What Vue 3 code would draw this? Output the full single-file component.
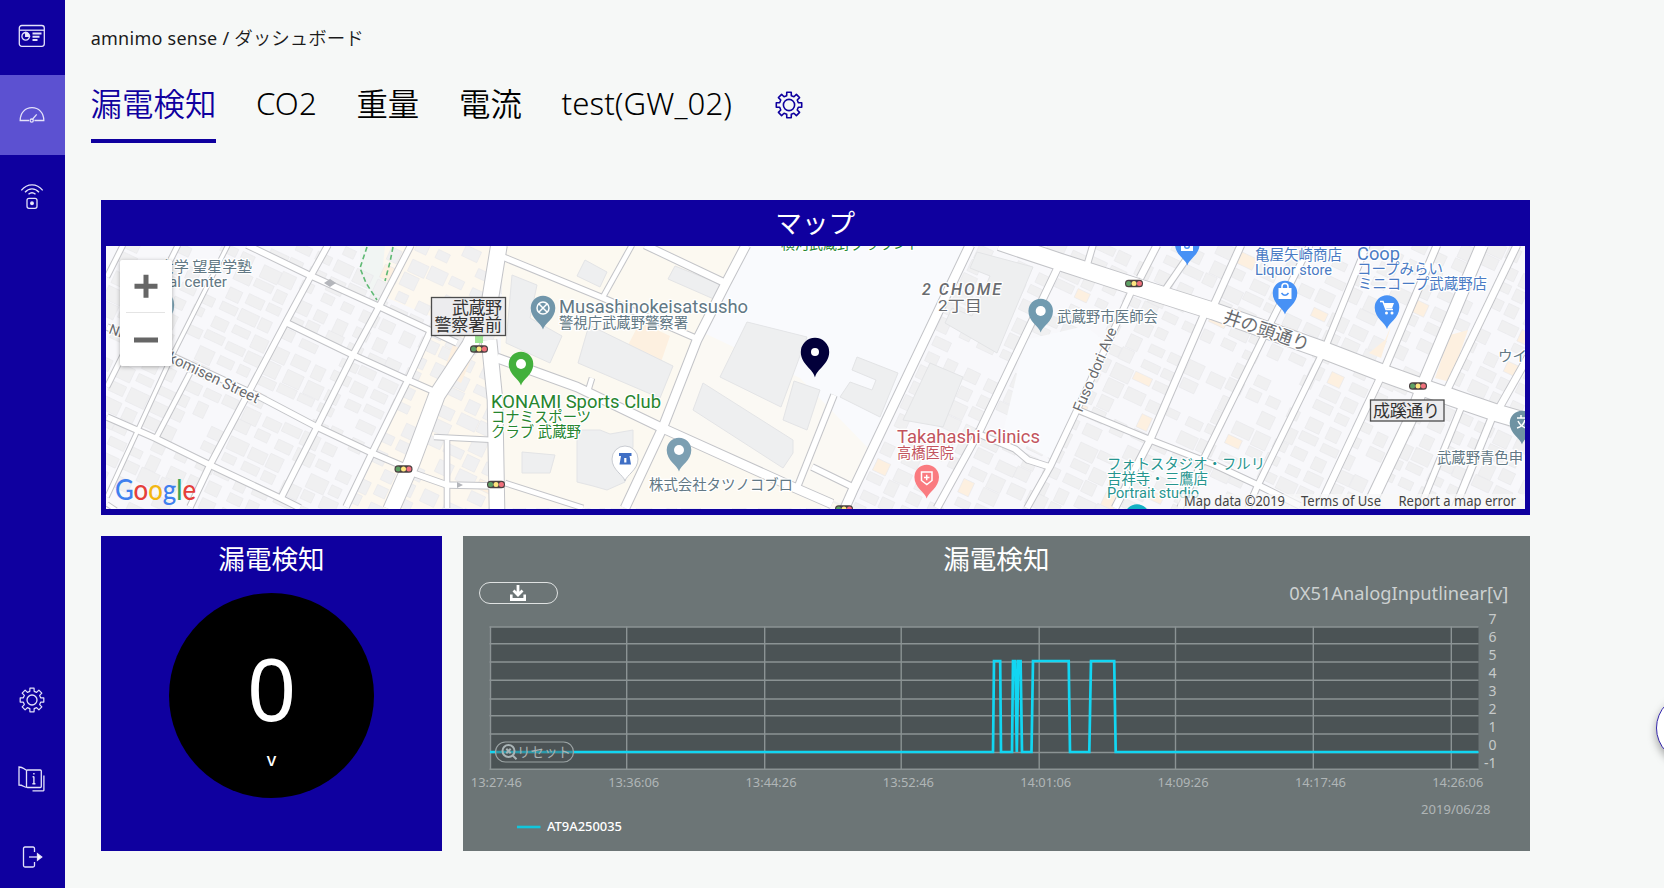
<script setup>
const tabs = [
  { t: '漏電検知', jp: true }, { t: 'CO2' }, { t: '重量', jp: true },
  { t: '電流', jp: true }, { t: 'test(GW_02)' },
]

const gear = (() => {
  const pts = []
  const at = (r, deg) => {
    const a = (deg * Math.PI) / 180
    return `${(r * Math.sin(a)).toFixed(2)} ${(-r * Math.cos(a)).toFixed(2)}`
  }
  for (let i = 0; i < 8; i++) {
    const c = i * 45
    pts.push(at(9.6, c - 14), at(12.9, c - 10), at(12.9, c + 10), at(9.6, c + 14))
  }
  return 'M' + pts.join('L') + 'Z'
})()

// Map roads: [width, points]
const roads = [
  [5, '107,277 123,245'], [5, '107,387 178,245'], [4, '107,497 172,356 228,245'],
  [5, '156,438 190,373'], [6, '190,507 210,465 243,403 287,320 313,272 328,245'],
  [6, '280,500 317,427 353,355 380,305 411,245'], [6, '346,507 372,453 408,380 430,332'],
  [16, '391,510 412,462 437,395 470,345 490,300 499,245'], [15, '489,340 495,400 497,510'],
  [6, '247,245 307,274 380,307 457,343'], [6, '285,322 353,355 408,380 440,394'],
  [6, '107,327 180,360 260,397 317,427 372,453 405,467'],
  [6, '107,417 155,438 210,465 280,498 300,508'], [4, '107,504 116,510'],
  [5, '434,437 495,440'], [5, '447,440 447,508'], [6, '410,472 447,485 497,486'],
  [5, '505,483 583,508'], [6, '503,257 603,298 700,340'], [5, '603,297 632,245'],
  [9, '746,245 725,285 697,340 663,427 625,508'], [7, '645,245 723,282'],
  [9, '497,358 577,387 660,427 793,487 832,504'], [5, '588,391 592,378'],
  [6, '797,488 834,395'], [6, '812,467 855,488'], [9, '970,245 853,490 845,508'],
  [7, '1060,263 980,430 937,508'], [6, '974,432 1015,449 1028,460 1050,467'],
  [6, '1133,288 1077,410 1050,467 1027,508'], [7, '1140,278 1157,245'],
  [6, '1085,272 1093,245'], [6, '1078,410 1153,441 1215,465 1260,486 1300,506'],
  [7, '1207,308 1150,440 1115,508'], [7, '1213,307 1241,245'], [6, '1165,290 1196,245'],
  [6, '1310,245 1267,330 1203,460 1180,508'], [6, '1367,245 1325,348 1257,487 1248,508'],
  [7, '1437,245 1384,370 1325,495 1320,508'], [12, '1482,245 1423,385 1410,420 1368,508'],
  [7, '1517,245 1447,390'], [6, '1463,403 1420,508'], [7, '1528,357 1498,410'],
  [7, '1493,415 1455,508'],
  [17, '1000,242 1060,262 1137,287 1213,311 1323,350 1380,372 1430,390 1497,413 1528,422'],
]

// Small houses laid on a grid that follows the street direction
const houses = (() => {
  let seed = 11
  const rnd = () => (seed = (seed * 16807) % 2147483647) / 2147483647
  const out = []
  for (let u = 0; u < 1500; u += 22) {
    for (let v = -600; v < 330; v += 17) {
      const w = 11 + rnd() * 9
      const h = 8 + rnd() * 7
      const o = rnd() * 4
      const warm = rnd()
      const skip = rnd()
      const x = 100 + u * 0.905 - v * 0.425
      const y = 246 + u * 0.425 + v * 0.905
      if (x < 95 || x > 1530 || y < 235 || y > 515 || skip < 0.16) continue
      out.push({ x: u + o, y: v + o, w, h, warm: x > 380 && warm > 0.965 })
    }
  }
  return out
})()

const blocks = [
  '512,275 537,285 530,318 562,336 550,363 506,343', '589,325 673,366 660,398 578,363',
  '747,322 807,337 781,407 720,377', '703,383 793,440 793,453 783,468 693,410',
  '794,381 820,390 807,430 783,420',
  '577,430 600,430 610,434 633,430 633,447 622,470 625,482 607,490 593,486 577,482',
  '977,252 1033,267 997,353 945,323 952,308 972,316 990,276 970,268', '930,363 963,377 943,427 903,420',
  '857,357 898,373 880,417 840,397 850,382 872,390 876,380 852,370', '585,260 607,272 600,287 577,276',
  '675,266 722,285 716,300 668,279', '522,452 555,455 550,473 522,473',
]

const labels = [
  { t: '大学 望星学塾', x: 159, y: 272, s: 15, w: 93, c: 'slate' },
  { t: 'Cultural center', x: 129, y: 286.5, s: 14.5, w: 98, c: 'slate' },
  { t: 'Musashinokeisatsusho', x: 559, y: 313, s: 18, w: 189, c: 'slate' },
  { t: '警視庁武蔵野警察署', x: 559, y: 328, s: 14.5, w: 129, c: 'slate' },
  { t: 'KONAMI Sports Club', x: 491, y: 407.5, s: 18, w: 170, c: 'green' },
  { t: 'コナミスポーツ', x: 491, y: 422, s: 14.5, w: 100, c: 'green' },
  { t: 'クラブ 武蔵野', x: 491, y: 437, s: 14.5, w: 90, c: 'green' },
  { t: '株式会社タツノコブロ', x: 649, y: 490, s: 14.5, w: 144, c: 'slate' },
  { t: '武蔵野市医師会', x: 1057, y: 322, s: 14.5, w: 101, c: 'slate' },
  { t: 'Takahashi Clinics', x: 897, y: 443, s: 18, w: 143, c: 'red' },
  { t: '高橋医院', x: 897, y: 458, s: 14.5, w: 57, c: 'red' },
  { t: 'フォトスタジオ・フルリ', x: 1107, y: 469, s: 14.5, w: 158, c: 'teal' },
  { t: '吉祥寺・三鷹店', x: 1107, y: 484, s: 14.5, w: 101, c: 'teal' },
  { t: 'Portrait studio', x: 1107, y: 498, s: 14, w: 92, c: 'teal' },
  { t: '亀屋矢崎商店', x: 1255, y: 260, s: 14.5, w: 87, c: 'blue' },
  { t: 'Liquor store', x: 1255, y: 274.5, s: 14, w: 77, c: 'blue' },
  { t: 'Coop', x: 1357, y: 259.5, s: 18, w: 43, c: 'blue' },
  { t: 'コープみらい', x: 1357, y: 274, s: 14.5, w: 86, c: 'blue' },
  { t: 'ミニコープ武蔵野店', x: 1358, y: 289, s: 14.5, w: 129, c: 'blue' },
  { t: '武蔵野青色申', x: 1437, y: 463, s: 14.5, w: 86, c: 'slate' },
  { t: 'ウイ', x: 1498, y: 361, s: 14.5, w: 29, c: 'slate' },
  { t: '横河武蔵野グラウンド', x: 781, y: 248.5, s: 14.5, w: 140, c: 'green' },
  { t: '2丁目', x: 938, y: 311, s: 15, w: 44, c: 'gray' },
]

const pins = [
  { x: 543, y: 308, f: '#7196aa' }, { x: 521, y: 364, f: '#43b03c', dot: 1 },
  { x: 679, y: 450, f: '#7c9fb2', dot: 1 }, { x: 1040.7, y: 311, f: '#719bb0', dot: 1 },
  { x: 926.7, y: 477, f: '#fa7b80' }, { x: 1285, y: 293, f: '#4791f5' },
  { x: 1387, y: 307.5, f: '#4791f5' }, { x: 1187.3, y: 244, f: '#4791f5' },
  { x: 1522, y: 423, f: '#6f93a3' }, { x: 1137, y: 516.5, f: '#12b0c4' },
]

const lights = [[403.5, 469], [479, 349], [496, 484.5], [1134, 283.5], [1418, 386], [844, 509]]

const gridY = [627, 643.7, 662, 680.3, 699, 715.7, 734, 752.5, 769.3]
const gridX = [490.5, 626.7, 764.7, 901.2, 1039.2, 1175.5, 1313.3, 1451.3]
const yLabels = [7, 6, 5, 4, 3, 2, 1, 0, -1].map((v, i) => ({ v, y: 624 + i * 18 }))
const xLabels = ['13:27:46', '13:36:06', '13:44:26', '13:52:46', '14:01:06', '14:09:26', '14:17:46', '14:26:06']
  .map((t, i) => ({ t, x: 470.8 + i * 137.35 }))
const series =
  '490,752 993,752 994,661 1000.2,661 1001,752 1012,752 1013,661 1015.3,661 1016.8,752 1018.3,661 1020.6,661 1022,752 1031.5,752 1033,661 1068.7,661 1070,752 1089.3,752 1091,661 1114.2,661 1115.7,752 1478.5,752'
</script>

<template>
  <div class="app">
    <nav class="sidebar">
      <a class="item first">
        <svg width="28" height="24" viewBox="0 0 28 24" class="line">
          <rect x="1.3" y="1.5" width="25" height="20.8" rx="2.5" /><path d="M1.5 6.2h24.7" />
          <path d="M11.5 12.3a3.8 3.8 0 1 1-3.7-3.8v3.8z" /><path d="M7.8 8.5a3.8 3.8 0 0 1 3.8 3.8l-3.8 0z" fill="#eceaff" />
          <path d="M14.5 9.5h9M14.5 12.8h7M14.5 16h5" stroke-width="1.9" />
        </svg>
      </a>
      <a class="item active">
        <svg width="28" height="18" viewBox="0 0 28 18" class="line">
          <path d="M11 14.5H2.2c0-8 5.2-12.8 11.8-12.8s11.8 4.8 11.8 12.8H16.4" /><circle cx="13.7" cy="14.6" r="1.6" /><path d="M14.7 13l4-4.6" />
        </svg>
      </a>
      <a class="item sensor">
        <svg width="26" height="28" viewBox="0 0 26 28" class="line">
          <path d="M2.3 8.3c6-7.2 15.4-7.2 21.4 0M6 10.3c4-4.6 10-4.6 14 0M9.5 12.3c2.2-2 4.8-2 7 0" />
          <rect x="8" y="16.3" width="10" height="10" rx="2" /><circle cx="13" cy="21.3" r="1.3" fill="#fff" />
        </svg>
      </a>
      <span class="grow"></span>
      <a class="item">
        <svg width="28" height="28" viewBox="-14 -14 28 28" class="line"><path :d="gear" stroke-linejoin="round" transform="scale(.93)" /><circle r="5" /></svg>
      </a>
      <a class="item">
        <svg width="30" height="28" viewBox="0 0 30 28" class="line">
          <rect x="9.5" y="5" width="14.8" height="17.5" rx="1" /><path d="M9.5 5C7 4.5 6.5 2 2 2v18c4 0 4.5 2 7.5 2.3M26.9 10.5v14.8q0 .5-.5.5H15.5" />
          <path d="M16.9 11.5v7M15.4 18.7h3M15.6 11.7h1.3M16.9 8v1.5" stroke-width="1.4" />
        </svg>
      </a>
      <a class="item last">
        <svg width="24" height="24" viewBox="0 0 24 24" class="line">
          <path d="M14.5 7V3.5q0-1.5-1.5-1.5H5Q3.5 2 3.5 3.5v17Q3.5 22 5 22h8q1.5 0 1.5-1.5V17" /><path d="M9 12h10" /><path d="M17.5 8.8l4.2 3.2-4.2 3.2z" fill="#fff" />
        </svg>
      </a>
    </nav>

    <main class="main">
      <div class="crumbs"><span class="crumb-root">amnimo sense /</span><span>ダッシュボード</span></div>
      <div class="tabs">
        <a v-for="(tab, i) in tabs" :key="tab.t" class="tab" :class="{ on: i === 0, jp: tab.jp }">{{ tab.t }}</a>
        <svg class="tab-gear" width="30" height="30" viewBox="-15 -15 30 30"><path :d="gear" stroke-linejoin="round" /><circle r="5.6" /></svg>
      </div>

      <section class="card map-card">
        <h2>マップ</h2>
        <svg class="map" width="1419" height="263" viewBox="106 246 1419 263">
          <rect x="106" y="246" width="1419" height="263" fill="#f8f8fb" />
          <path d="M360 246h40l-22 58-18-28z" fill="#f1f5f3" />
          <path d="M385 246h115l-10 264H350l50-110 40-80-60-25z" fill="#fdf8ef" />
          <g transform="matrix(.905 .425 -.425 .905 100 246)">
            <rect v-for="(h, i) in houses" :key="i" :x="h.x" :y="h.y" :width="h.w" :height="h.h" :fill="h.warm ? '#fdf0e0' : '#f0f0f1'" stroke="#e9e9eb" stroke-width=".6" />
          </g>
          <path d="M503 246h243L663 427 845 508H497z" fill="#fcf9f1" />
          <path d="M703 330L663 427l185 80 30-60-80-75z" fill="#fbf9f4" />
          <path d="M746 246h222L870 450l-70-72-96-45z" fill="#f9fafd" />
          <path d="M1025 340l60-14 20 15-50 120-52-28z" fill="#f9fafd" />
          <path d="M640 322l30 14-9 26-34-15zM453 345l20 10-12 28-18-10zM1450 335l18-5-18 52-15-4zM1385 340l6-14-10 32-12-5z" fill="#fdf0e0" />
          <polygon v-for="(b, i) in blocks" :key="'b' + i" :points="b" fill="#eeeff0" stroke="#e3e4e6" />
          <polyline v-for="(r, i) in roads" :key="'c' + i" :points="r[1]" fill="none" stroke="#c3c4c8" :stroke-width="r[0] + 1.6" stroke-linejoin="round" />
          <polyline v-for="(r, i) in roads" :key="'r' + i" :points="r[1]" fill="none" stroke="#fff" :stroke-width="r[0] - 0.4" stroke-linejoin="round" />
          <path d="M367 247l-7 21 6 15 11 17M393 247l-3 15-5 19" class="trail" />
          <path d="M324 283l6-4 6 4-6 4zM449 485h8v-3l6 3-6 3v-3" fill="#b4b6bb" />
          <rect x="475" y="335" width="8" height="8" fill="#9fe495" />

          <g v-for="(l, i) in lights" :key="'l' + i" :transform="`translate(${l[0]} ${l[1]})`">
            <rect x="-9" y="-3.8" width="18" height="7.6" rx="3.5" fill="#4a4040" />
            <circle cx="-5.4" r="2.5" fill="#5da064" /><circle r="2.5" fill="#ffe680" /><circle cx="5.4" r="2.5" fill="#f0707c" />
          </g>

          <g v-for="(p, i) in pins" :key="'p' + i" :transform="`translate(${p.x} ${p.y})`">
            <path d="M0 21.5C-1.5 15-12.3 11-12.3 0a12.3 12.3 0 0 1 24.6 0C12.3 11 1.5 15 0 21.5z" :fill="p.f" />
            <circle v-if="p.dot" r="5" fill="#fff" />
          </g>
          <g fill="none" stroke="#fff" stroke-width="1.5">
            <circle cx="543" cy="308" r="6" /><path d="M539 304l8 8M547 304l-8 8" />
            <path d="M921.5 472h10.5v8.5l-5.2 4-5.3-4zM924 477.5h5.5M926.7 474.8v5.5" />
            <path d="M1282 289v-2.5a3 3 0 0 1 6 0v2.5" />
            <path d="M1517 418h9M1521 415v3M1518 421c2 4 4 6 8 7M1525 420c-1 4-4 7-8 8" />
            <path d="M1380 301.5h3l3 8h7" />
          </g>
          <path d="M1278.5 288h13v11h-13zM1384 303h10l-2 5.5h-6.5zM1181 243h12v8h-12z" fill="#fff" />
          <circle cx="1386.5" cy="313" r="1.5" fill="#fff" /><circle cx="1392" cy="313" r="1.5" fill="#fff" />
          <path d="M1281.5 293q3.5 4.5 7 0" fill="none" stroke="#4791f5" stroke-width="1.5" />
          <circle cx="1187" cy="246" r="2.3" fill="none" stroke="#4791f5" stroke-width="1.4" />
          <path d="M625 481c-1.5-6-13-11-13-22a13 13 0 0 1 26 0c0 11-11.5 16-13 22z" fill="#fff" stroke="#c9ccd2" />
          <path d="M619 453h12.500v3h-2l1.500 8.500h-11.500l1.500-8.500h-2z" fill="#3f6fc5" /><path d="M625.3 458v4.500" stroke="#fff" stroke-width="2.2" />
          <path d="M815 377.5C813.5 369 800.8 364.5 800.8 352a14.2 14.2 0 0 1 28.4 0C829.2 364.5 816.5 369 815 377.5z" fill="#02003a" /><circle cx="815" cy="352" r="4" fill="#fff" />

          <text v-for="l in labels" :key="l.t" :x="l.x" :y="l.y" :font-size="l.s" :textLength="l.w" lengthAdjust="spacingAndGlyphs" class="label" :class="l.c">{{ l.t }}</text>
          <text x="922" y="294.5" font-size="16" textLength="79" class="label gray italic">2 CHOME</text>
          <text transform="translate(1082 413) rotate(-67)" font-size="15" textLength="90" class="label gray">Fuso dori Ave</text>
          <text transform="translate(167 361) rotate(25.5)" font-size="15" textLength="99" class="label gray">komisen Street</text>
          <text transform="translate(108 333) rotate(20)" font-size="14" class="label gray">Ni</text>
          <text transform="translate(1222 322) rotate(19)" font-size="18" textLength="90" lengthAdjust="spacingAndGlyphs" class="label gray">井の頭通り</text>
          <g class="signs">
            <rect x="431.5" y="297.5" width="74" height="38" /><text x="452" y="313.5" textLength="50">武蔵野</text><text x="434.5" y="331" textLength="67.5">警察署前</text>
            <rect x="1370.5" y="400" width="73.5" height="21" /><text x="1373" y="416.5" textLength="67">成蹊通り</text>
          </g>

          <rect x="1178" y="494" width="347" height="15" fill="#f8f8f8" opacity=".7" />
          <g class="credits">
            <text x="1184" y="506" textLength="101" lengthAdjust="spacingAndGlyphs">Map data ©2019</text><text x="1301" y="506" textLength="80" lengthAdjust="spacingAndGlyphs">Terms of Use</text><text x="1398.5" y="506" textLength="117.5" lengthAdjust="spacingAndGlyphs">Report a map error</text>
          </g>
          <text x="115" y="499.5" textLength="81" lengthAdjust="spacingAndGlyphs" class="google"><tspan fill="#3f7fee">G</tspan><tspan fill="#e5403a">o</tspan><tspan fill="#f3b712">o</tspan><tspan fill="#3f7fee">g</tspan><tspan fill="#3ba757">l</tspan><tspan fill="#e5403a">e</tspan></text>

          <g class="zoom">
            <rect x="120" y="260" width="52" height="106" rx="2" fill="#fff" />
            <path d="M126 312.5h39" stroke="#e4e4e4" /><path d="M134.5 286.3h23M146 274.8v23M134 340h24" stroke="#666" stroke-width="5" />
          </g>
          <path d="M172.2 297q4 8 0 17z" fill="#6f93a3" />
        </svg>
      </section>

      <div class="row">
        <section class="card value-card">
          <h2>漏電検知</h2>
          <div class="disc"><span class="num">0</span><span class="unit">v</span></div>
        </section>

        <section class="card chart-card">
          <h2>漏電検知</h2>
          <div class="chart-bar">
            <button class="download" aria-label="download">
              <svg width="16" height="16" viewBox="0 0 16 16"><path d="M8 0v8M3.5 5.5L8 10l4.5-4.5M1.2 9.5v5h13.6v-5" fill="none" stroke="#fff" stroke-width="2.8" /></svg>
            </button>
            <span class="quantity">0X51AnalogInputlinear[v]</span>
          </div>
          <svg class="chart" width="1067" height="243" viewBox="463 608 1067 243">
            <rect x="490" y="627" width="988.5" height="142" fill="#4b5355" />
            <path v-for="y in gridY" :key="y" :d="`M489.5 ${y}H1478.5`" class="grid" />
            <path v-for="x in gridX" :key="x" :d="`M${x} 626.5V769.8`" class="grid" />
            <polyline :points="series" fill="none" stroke="#12d6f2" stroke-width="2.7" />
            <g class="reset">
              <rect x="495.5" y="742" width="78" height="20" rx="10" />
              <circle cx="508.5" cy="751" r="6" /><path d="M512.5 755.3l4 4M506.3 748.8l4.4 4.4M510.7 748.8l-4.4 4.4" />
              <text x="517" y="757" textLength="54" lengthAdjust="spacingAndGlyphs">リセット</text>
            </g>
            <text v-for="l in yLabels" :key="l.v" x="1496.5" :y="l.y - 0.5" text-anchor="end" class="tick y">{{ l.v }}</text>
            <text v-for="l in xLabels" :key="l.t" :x="l.x" y="786.5" textLength="51" lengthAdjust="spacingAndGlyphs" class="tick">{{ l.t }}</text>
            <text x="1421" y="813.5" textLength="69.5" lengthAdjust="spacingAndGlyphs" class="tick">2019/06/28</text>
            <path d="M517 827h23.5" stroke="#12c6dc" stroke-width="2.6" />
            <text x="547" y="830.5" textLength="75" lengthAdjust="spacingAndGlyphs" class="legend">AT9A250035</text>
          </svg>
        </section>
      </div>
    </main>
    <span class="fab"></span>
  </div>
</template>

<style>
body { margin: 0; }
</style>

<style scoped>
.app { position: relative; display: flex; width: 1664px; height: 888px; overflow: hidden; background: #f6f8f7; color: #000; font-family: "Noto Sans", "Noto Sans CJK JP", sans-serif; }
.sidebar { display: flex; flex-direction: column; flex: none; width: 64.5px; box-sizing: border-box; background: #0f009f; }
.item { display: flex; align-items: center; justify-content: center; height: 79px; flex: none; box-sizing: border-box; padding-right: 1px; }
.item.first { height: 75.4px; padding-bottom: 3px; }
.item.active { height: 80px; background: #5c51d1; }
.item.sensor { height: 81px; }
.item.last { height: 70px; padding-top: 8px; }
.grow { flex: 1; }
.line { fill: none; stroke: #e4e2fa; stroke-width: 1.3; display: block; }
.main { display: flex; flex-direction: column; flex: none; width: 1466px; }
.crumbs { display: flex; margin: 24px 0 0 26.2px; height: 28px; line-height: 28px; font-size: 18px; gap: 5px; color: #1b1b1b; white-space: nowrap; }
.crumbs span:last-child { font-weight: 350; font-size: 18.5px; }
.crumb-root { letter-spacing: .25px; }
.tabs { display: flex; align-items: flex-start; gap: 39.6px; margin: 27.500px 0 0 26px; height: 63.500px; white-space: nowrap; }
.tab { font-size: 31.2px; font-weight: 350; line-height: 47px; height: 59px; letter-spacing: .08px; }
.tab.jp { font-size: 31.4px; }
.tab.on { color: #0f009f; border-bottom: 4px solid #0f009f; }
.tab-gear { margin: 10px 0 0 2px; fill: none; stroke: #0f009f; stroke-width: 1.6; }
.card { box-sizing: border-box; flex: none; background: #0f009f; color: #fff; }
.card h2 { margin: 0; font-size: 26.6px; font-weight: 400; text-align: center; line-height: 46px; height: 46px; }
.map-card { margin: 57px 0 0 36.2px; width: 1429px; height: 315px; padding: 0 5px; }
.map { display: block; }
.row { display: flex; gap: 20.5px; margin: 21px 0 0 36.2px; }
.value-card { width: 341.7px; height: 315px; display: flex; flex-direction: column; align-items: center; }
.disc { margin-top: 11px; width: 205px; height: 205px; border-radius: 50%; background: #000; display: flex; flex-direction: column; align-items: center; }
.num { font-size: 86px; line-height: 100px; margin-top: 45px; }
.unit { font-size: 18px; font-weight: 500; line-height: 24px; margin-top: 9px; }
.chart-card { width: 1067px; height: 315px; background: #6c7576; }
.chart-bar { display: flex; justify-content: space-between; align-items: flex-start; height: 26px; padding: 0 21.5px 0 16px; box-sizing: border-box; }
.download { width: 79px; height: 22px; box-sizing: border-box; border: 1.5px solid #dfe2e2; border-radius: 11px; background: none; padding: 0; display: flex; align-items: center; justify-content: center; }
.quantity { font-size: 18.3px; color: #cdd1d1; line-height: 22px; }
.chart { display: block; }
.grid { stroke: #8b9394; stroke-width: 1.4; }
.tick { font-size: 13.3px; fill: #b0b5b6; }
.tick.y { font-size: 14px; fill: #c6caca; }
.legend { font-size: 13.3px; font-weight: 500; fill: #fff; }
.reset rect { fill: rgba(75, 83, 85, .45); stroke: #9ba3a4; stroke-width: 1.2; }
.reset circle, .reset path { fill: none; stroke: #a9b4b6; stroke-width: 2; }
.reset text { font-size: 14px; fill: #aab3b4; }
.label { font-family: Roboto, "Noto Sans CJK JP", sans-serif; paint-order: stroke; stroke: #fff; stroke-width: 2.5px; stroke-linejoin: round; }
.slate { fill: #627884; }
.green { fill: #26852e; }
.red { fill: #c2545e; }
.teal { fill: #26958f; }
.blue { fill: #4a7bc4; }
.gray { fill: #6a6c70; }
.italic { font-style: italic; font-weight: 500; }
.trail { fill: none; stroke: #5fb974; stroke-width: 1.6; stroke-dasharray: 5 3; }
.signs rect { fill: #ececee; stroke: #4c4c4c; stroke-width: 1.3; }
.signs text { font: 17px "Noto Sans CJK JP", sans-serif; fill: #333; }
.credits { font-size: 13.8px; fill: #444; }
.google { font: 500 28px Lato, sans-serif; }
.zoom { filter: drop-shadow(0 1px 2px rgba(0, 0, 0, .3)); }
.zoom path { fill: none; }
.fab { position: absolute; left: 1656px; top: 694px; width: 66px; height: 66px; border: 1.5px solid #3528ad; border-radius: 50%; background: #fff; box-shadow: 0 4px 8px rgba(0, 0, 0, .35); }
</style>
